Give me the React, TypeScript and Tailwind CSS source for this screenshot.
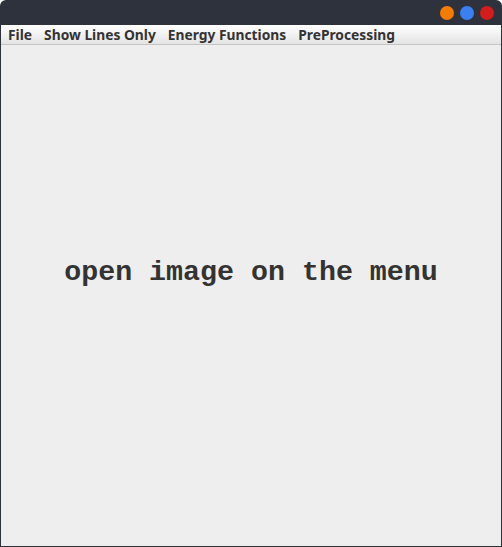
export default function App() {
  const menus = ["File", "Show Lines Only", "Energy Functions", "PreProcessing"];

  return (
    <div className="w-[502px] h-[547px] bg-[#2e323d] rounded-t-[6px] flex flex-col overflow-hidden">
      {/* title bar */}
      <div className="h-[25px] flex items-center justify-end gap-[6px] pr-[8px] pt-[1px]">
        <span className="w-[14px] h-[14px] rounded-full bg-[#f57c00]" />
        <span className="w-[14px] h-[14px] rounded-full bg-[#3b7ff0]" />
        <span className="w-[14px] h-[14px] rounded-full bg-[#d41c1c]" />
      </div>

      <div className="flex-1 flex flex-col mx-[1px] mb-[1px] bg-[#eeeeee]">
        {/* menu bar */}
        <div className="h-[20px] flex items-center pl-[1px] bg-gradient-to-b from-[#ffffff] to-[#e4e4e4] border-b border-[#c4c4c4] font-['Noto_Sans',sans-serif] font-bold text-[13.8px] text-[#333333]">
          {menus.map((m) => (
            <span key={m} className="px-[6px] leading-none">
              {m}
            </span>
          ))}
        </div>

        {/* canvas */}
        <div className="flex-1 flex justify-center pt-[213px]">
          <p className="font-['Liberation_Mono',monospace] font-bold text-[28.3px] leading-none text-[#333333]">
            open image on the menu
          </p>
        </div>
      </div>
    </div>
  );
}
